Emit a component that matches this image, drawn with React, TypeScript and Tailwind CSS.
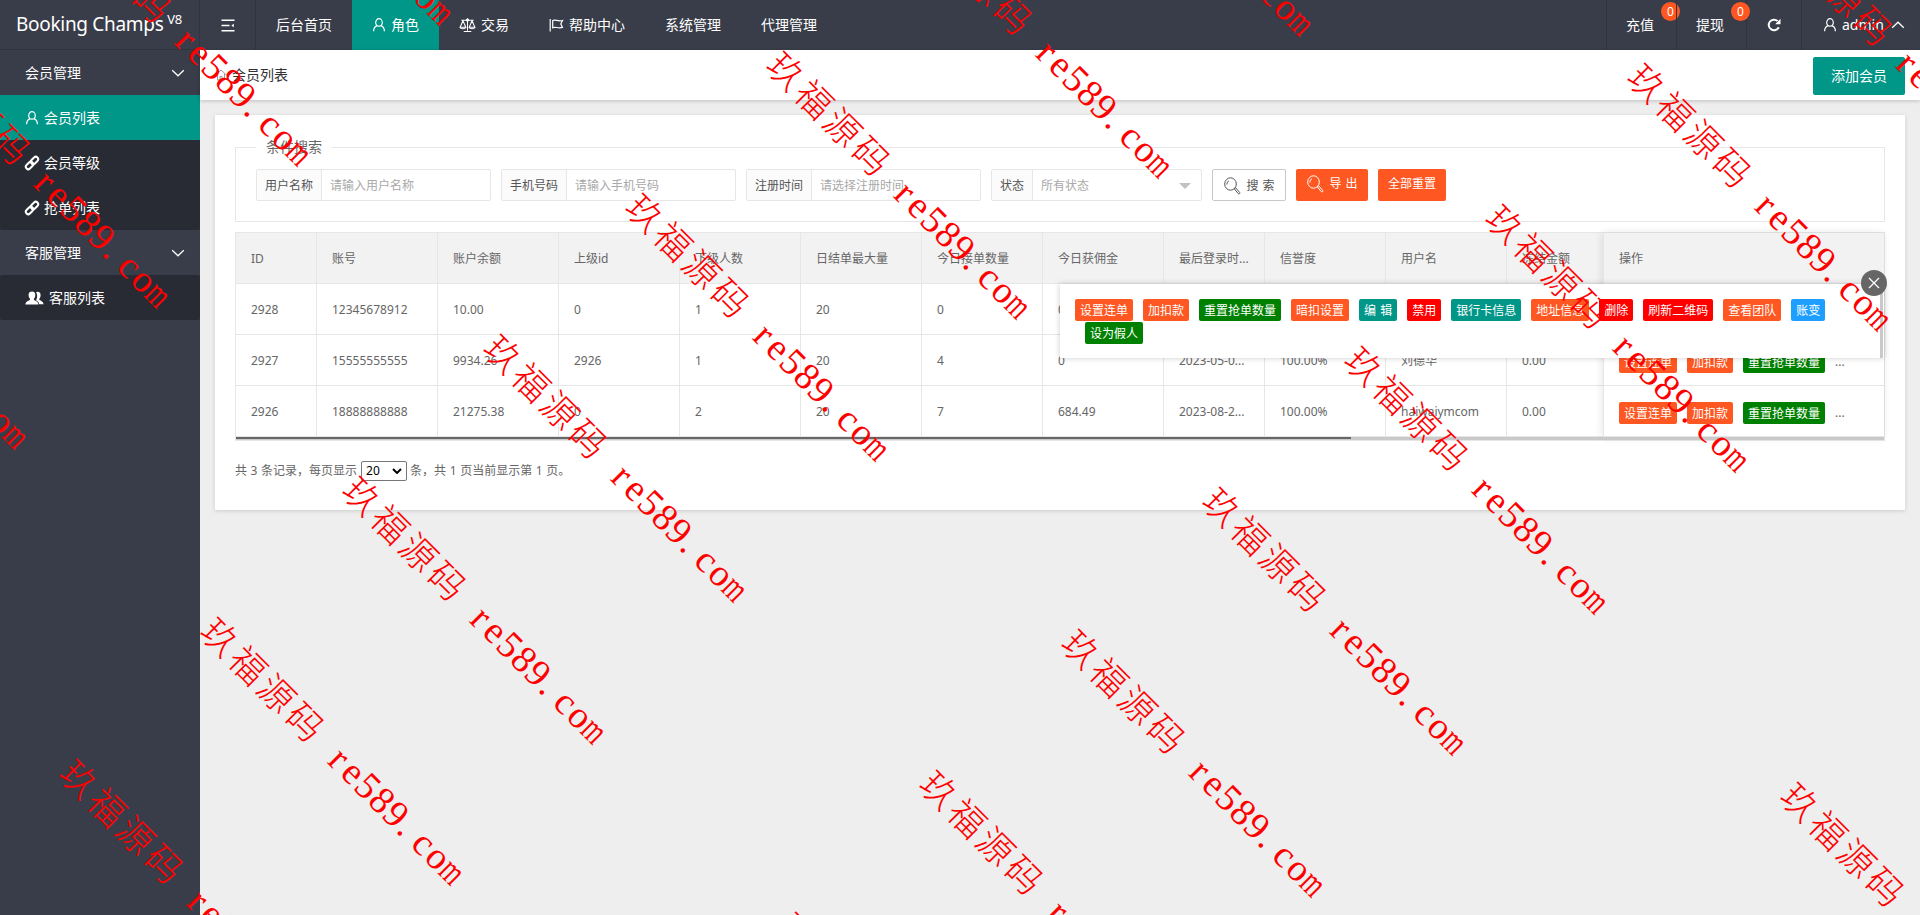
import type { ReactNode } from 'react';
import clsx from 'clsx';

const BUTTONS = {
  orange: 'bg-[#FF5722]',
  green: 'bg-[#008000]',
  teal: 'bg-[#009688]',
  red: 'bg-[#FF0000]',
  blue: 'bg-[#1E9FFF]',
} as const;

type ButtonColor = keyof typeof BUTTONS;

const columns = [
  { title: 'ID', width: 'w-[81px]' },
  { title: '账号', width: 'w-[121px]' },
  { title: '账户余额', width: 'w-[121px]' },
  { title: '上级id', width: 'w-[121px]' },
  { title: '下级人数', width: 'w-[121px]' },
  { title: '日结单最大量', width: 'w-[121px]' },
  { title: '今日接单数量', width: 'w-[121px]' },
  { title: '今日获佣金', width: 'w-[121px]' },
  { title: '最后登录时...', width: 'w-[101px]' },
  { title: '信誉度', width: 'w-[121px]' },
  { title: '用户名', width: 'w-[121px]' },
  { title: '冻结金额', width: 'w-[97px]' },
];

const rows = [
  ['2928', '12345678912', '10.00', '0', '1', '20', '0', '0', '', '', '', ''],
  ['2927', '15555555555', '9934.26', '2926', '1', '20', '4', '0', '2023-05-0...', '100.00%', '刘德华', '0.00'],
  ['2926', '18888888888', '21275.38', '0', '2', '20', '7', '684.49', '2023-08-2...', '100.00%', 'haiwaiymcom', '0.00'],
];

const rowActions: [string, ButtonColor][] = [
  ['设置连单', 'orange'],
  ['加扣款', 'orange'],
  ['重置抢单数量', 'green'],
];

const popupActions: [string, ButtonColor][] = [
  ...rowActions,
  ['暗扣设置', 'orange'],
  ['编 辑', 'teal'],
  ['禁用', 'red'],
  ['银行卡信息', 'teal'],
  ['地址信息', 'orange'],
  ['删除', 'red'],
  ['刷新二维码', 'red'],
  ['查看团队', 'orange'],
  ['账变', 'blue'],
];

// The watermark repeats every 616px along the 45° line, with 200px between lines
const watermarks: [number, number][] = [];
for (let i = -3; i <= 4; i++) {
  for (let j = -8; j <= 8; j++) {
    const x = 218 + i * 436 - j * 141.5;
    const y = 638 + i * 436 + j * 141.5;
    if (x > -250 && x < 1935 && y > -250 && y < 935) watermarks.push([x, y]);
  }
}

const UserIcon = () => (
  <svg viewBox="0 0 14 14" className="w-3.5 h-3.5 shrink-0" fill="none" stroke="currentColor" strokeWidth="1.2">
    <ellipse cx="7" cy="4.4" rx="3.3" ry="3.7" />
    <path d="M1.6 13.2c0-3.3 1.6-5 3.7-5.6M12.4 13.2c0-3.3-1.6-5-3.7-5.6" />
  </svg>
);

const LinkIcon = () => (
  <svg viewBox="0 0 14 14" className="w-3.5 h-3.5 shrink-0 overflow-visible" fill="none" stroke="currentColor" strokeWidth="2">
    <rect x="-4.2" y="-2.4" width="8.4" height="4.8" rx="2.4" transform="translate(4.5 9.5) rotate(-45)" />
    <rect x="-4.2" y="-2.4" width="8.4" height="4.8" rx="2.4" transform="translate(9.5 4.5) rotate(-45)" />
  </svg>
);

const GroupIcon = () => (
  <svg viewBox="0 0 19 14" className="w-[19px] h-3.5 shrink-0" fill="currentColor">
    <path d="M12.4.8c2.3 0 3.4 1.6 3.2 3.7-.1 1.5-.7 2.6-1.3 3.2v1.2c1.8.8 4 1.5 4.3 4.3h-4.4c-.5-2.2-1.9-3.2-3.3-3.9 1.3-1.6 1.9-5.6.2-7.9.3-.4.8-.6 1.3-.6z" />
    <path d="M7 .5c2.4 0 3.5 1.7 3.3 3.9-.1 1.6-.8 2.7-1.4 3.3v1.3c1.9.9 4.2 1.5 4.5 4.5H.4c.3-3 2.6-3.6 4.6-4.5V7.7c-.6-.6-1.3-1.7-1.4-3.3C3.4 2.2 4.6.5 7 .5z" />
  </svg>
);

const ScaleIcon = () => (
  <svg viewBox="0 0 18 16" className="w-[17px] h-4 shrink-0" fill="none" stroke="currentColor" strokeWidth="1.1">
    <path d="M9 .8v13.4M5 14.8h8M2.5 3h13M4.2 3.5L1.2 10.3h6zM13.8 3.5l-3 6.8h6z" />
    <path d="M1 10.3c.6 2.2 5.6 2.2 6.3 0M10.7 10.3c.6 2.2 5.6 2.2 6.3 0" />
    <circle cx="9" cy="2.8" r="1.2" />
  </svg>
);

const FlagIcon = () => (
  <svg viewBox="0 0 15 14" className="w-[15px] h-3.5 shrink-0" fill="none" stroke="currentColor" strokeWidth="1.2">
    <path d="M1.2 1v12.5" />
    <path d="M3.7 9.7V2.5c3-1.5 5 1.5 9.8 0L11.8 6l1.7 3.4c-4.6 1.5-6.8-1.2-9.8.3z" />
  </svg>
);

const SearchIcon = () => (
  <svg viewBox="0 0 18 18" className="w-[18px] h-[18px] shrink-0" fill="none" stroke="currentColor">
    <ellipse cx="7.5" cy="7" rx="5.8" ry="6.2" />
    <path d="M3.9 7.5c0-2 .9-3.2 2.1-3.7M11.3 11.8l1.4-1 4 4.7c.6 1-.6 2-1.5 1.1z" />
  </svg>
);

const Chevron = ({ up }: { up?: boolean }) => (
  <svg viewBox="0 0 14 8" className={clsx('w-3.5 h-2', up && 'rotate-180')} fill="none" stroke="currentColor" strokeWidth="1.3">
    <path d="M1.2 1.2L7 6.8l5.8-5.6" />
  </svg>
);

const NavItem = ({ icon, active, children }: { icon?: ReactNode; active?: boolean; children: ReactNode }) => (
  <li className={clsx('flex items-center gap-[5px] px-5 h-[50px]', active && 'bg-[#009688]')}>
    {icon}
    {children}
  </li>
);

const SideGroup = ({ title, children }: { title: string; children: ReactNode }) => (
  <li>
    <div className="flex items-center justify-between h-[45px] pl-[25px] pr-[15px]">
      <span>{title}</span>
      <Chevron />
    </div>
    <ul className="bg-[#282B33] rounded-[2px]">{children}</ul>
  </li>
);

const SideItem = ({ icon, active, children }: { icon: ReactNode; active?: boolean; children: ReactNode }) => (
  <li className={clsx('flex items-center gap-[5px] h-[45px] pl-[25px]', active && 'bg-[#009688]')}>
    {icon}
    {children}
  </li>
);

const TinyButton = ({ color, children }: { color: ButtonColor; children: ReactNode }) => (
  <button className={clsx('h-[22px] px-[5px] leading-[23px] rounded-[2px] text-white whitespace-nowrap shrink-0 [word-spacing:1px]', BUTTONS[color])}>
    {children}
  </button>
);

const Field = ({ label, placeholder, width, select }: { label: string; placeholder: string; width: string; select?: boolean }) => (
  <div className={clsx('flex shrink-0 h-8 border border-[#E6E6E6] rounded-[2px]', width)}>
    <label className="flex items-center px-2 pt-px bg-[#FBFBFB] border-r border-[#E6E6E6] text-[#555]">{label}</label>
    <div className="flex flex-1 items-center justify-between pt-px pl-2 pr-2.5 text-[#A9A9A9]">
      {placeholder}
      {select && <span className="border-x-[6px] border-x-transparent border-t-[6px] border-t-[#C2C2C2]" />}
    </div>
  </div>
);

const Badge = () => (
  <span className="absolute -right-1 top-[2px] w-[19px] h-[19px] rounded-full bg-[#FF5722] text-xs leading-[19px] text-center">
    0
  </span>
);

const Header = () => (
  <header className="flex h-[50px] bg-[#393D49] text-white text-sm">
    <div className="shrink-0 w-[200px] h-[50px] pl-4 border-r border-b border-[#31343F] text-[19px] leading-[49px] whitespace-nowrap tracking-[-0.3px]">
      Booking Champs <sup className="text-[13px] -top-[7px] -left-px">V8</sup>
    </div>
    <div className="flex items-center justify-center w-14 border-r border-[#31343F]">
      <svg viewBox="0 0 14 13" className="w-3.5 h-[13px]" stroke="currentColor" strokeWidth="1.6" fill="currentColor">
        <path d="M.5 1.3h13M.5 6.5h8M.5 11.7h13" />
        <path d="M12.8 4.8v3.4L10.3 6.5z" stroke="none" />
      </svg>
    </div>
    <ul className="flex">
      <NavItem>后台首页</NavItem>
      <NavItem icon={<UserIcon />} active>角色</NavItem>
      <NavItem icon={<ScaleIcon />}>交易</NavItem>
      <NavItem icon={<FlagIcon />}>帮助中心</NavItem>
      <NavItem>系统管理</NavItem>
      <NavItem>代理管理</NavItem>
    </ul>
    <ul className="flex ml-auto">
      <li className="relative flex items-center w-[70px] pl-[19px] border-l border-[#31343F]">
        充值
        <Badge />
      </li>
      <li className="relative flex items-center w-[70px] pl-[19px] border-l border-[#31343F]">
        提现
        <Badge />
      </li>
      <li className="flex items-center justify-center w-14 border-x border-[#31343F]">
        <svg viewBox="0 0 14 14" className="w-3.5 h-3.5" fill="none" stroke="currentColor" strokeWidth="2">
          <path d="M11.8 9.3A5.3 5.3 0 1 1 10.6 3" />
          <path d="M13.5.8v5.4H8.2z" fill="currentColor" stroke="none" />
        </svg>
      </li>
      <li className="flex items-center w-[118px] pl-[21px] gap-[5px]">
        <UserIcon />
        admin
        <span className="ml-[2px]"><Chevron up /></span>
      </li>
    </ul>
  </header>
);

const SearchForm = () => (
  <fieldset className="h-[85px] mt-[-10px] px-5 border border-[#E6E6E6]">
    <legend className="px-2.5 text-sm leading-5 text-[#666]">条件搜索</legend>
    <div className="flex gap-2.5 pt-3">
      <Field label="用户名称" placeholder="请输入用户名称" width="w-[235px]" />
      <Field label="手机号码" placeholder="请输入手机号码" width="w-[235px]" />
      <Field label="注册时间" placeholder="请选择注册时间" width="w-[235px]" />
      <Field label="状态" placeholder="所有状态" width="w-[211px]" select />
      <button className="flex items-center justify-center gap-[5px] w-[74px] h-8 pt-px border border-[#C9C9C9] rounded-[2px] text-[#555] [word-spacing:1px]">
        <SearchIcon />搜 索
      </button>
      <button className="flex items-center justify-center gap-[5px] w-[72px] h-8 pb-[3px] rounded-[2px] bg-[#FF5722] text-white [word-spacing:1px]">
        <SearchIcon />导 出
      </button>
      <button className="w-[68px] h-8 pb-[3px] rounded-[2px] bg-[#FF5722] text-white">全部重置</button>
    </div>
  </fieldset>
);

const cell = 'shrink-0 px-[15px] leading-[52px] h-[51px] border-b border-[#E6E6E6] whitespace-nowrap overflow-hidden';

const MemberTable = () => (
  <div className="relative mt-2.5 h-[209px] border border-[#E6E6E6]">
    <div className="flex">
      <div className="flex-1 min-w-0 overflow-hidden">
        <div className="flex bg-[#F2F2F2]">
          {columns.map((column) => (
            <div key={column.title} className={clsx(cell, 'border-r', column.width)}>{column.title}</div>
          ))}
        </div>
        {rows.map((row) => (
          <div key={row[0]} className="flex">
            {columns.map((column, index) => (
              <div key={column.title} className={clsx(cell, 'border-r', column.width)}>{row[index]}</div>
            ))}
          </div>
        ))}
      </div>
      <div className="shrink-0 w-[281px] relative border-l border-[#E6E6E6] shadow-[-1px_0_8px_rgba(0,0,0,.1)] bg-white">
        <div className={clsx(cell, 'bg-[#F2F2F2]')}>操作</div>
        {rows.map((row, index) => (
          <div key={row[0]} className="flex items-center gap-2.5 h-[51px] pl-[15px] pt-1 border-b border-[#E6E6E6]">
            {index > 0 && rowActions.map(([label, color]) => (
              <TinyButton key={label} color={color}>{label}</TinyButton>
            ))}
            {index > 0 && <span>...</span>}
          </div>
        ))}
      </div>
    </div>
    <div className="relative h-[3px] bg-[#C9C9C9]">
      <div className="h-[2px] w-[1115px] bg-[#666]" />
    </div>
    <RowActionsPopup />
  </div>
);

// Expanded action cell of the first row, laid over the table
const RowActionsPopup = () => (
  <div className="absolute right-0 top-[51px] w-[824px] h-[74px] pl-[15px] pt-[15px] bg-white shadow-[0_0_6px_rgba(0,0,0,.2)]">
    <div className="flex gap-2.5">
      {popupActions.map(([label, color]) => (
        <TinyButton key={label} color={color}>{label}</TinyButton>
      ))}
    </div>
    <div className="flex mt-px pl-2.5">
      <TinyButton color="green">设为假人</TinyButton>
    </div>
    <span className="absolute right-px bottom-0 w-[3px] h-[68px] bg-[#C9C9C9]" />
    <span className="absolute -right-[3px] -top-[14px] flex items-center justify-center w-[26px] h-[26px] rounded-full bg-[#666] text-white">
      <svg viewBox="0 0 12 12" className="w-3 h-3" stroke="currentColor" strokeWidth="1.3">
        <path d="M1 1l10 10M11 1L1 11" />
      </svg>
    </span>
  </div>
);

const Watermark = () => (
  <div className="pointer-events-none absolute inset-0 overflow-hidden text-[#FF0000]">
    {watermarks.map(([x, y]) => (
      <div
        key={`${x},${y}`}
        className="absolute flex w-[360px] h-10 origin-[20px_20px] rotate-45"
        style={{ left: x - 19, top: y - 20 }}
      >
        <span className="w-[180px] pl-[2px] text-[36px] leading-[37px] tracking-[4px] font-light whitespace-nowrap">
          玖福源码
        </span>
        {'re589.com'.split('').map((char, index) => (
          <span
            key={index}
            className={clsx(
              "flex justify-center w-5 text-[38px] leading-[39px] font-['Liberation_Serif',serif]",
              char === 'm' && 'scale-x-[.66]',
              char === '.' && '-translate-x-1'
            )}
          >
            {char}
          </span>
        ))}
      </div>
    ))}
  </div>
);

const App = () => (
  <div className="relative flex flex-col w-[1920px] h-[915px] overflow-hidden bg-[#EEE] font-['Noto_Sans','Noto_Sans_CJK_SC',sans-serif] text-xs text-[#666]">
    <Header />
    <div className="flex flex-1">
      <aside className="shrink-0 w-[200px] bg-[#393D49] text-white text-sm">
        <ul>
          <SideGroup title="会员管理">
            <SideItem icon={<UserIcon />} active>会员列表</SideItem>
            <SideItem icon={<LinkIcon />}>会员等级</SideItem>
            <SideItem icon={<LinkIcon />}>抢单列表</SideItem>
          </SideGroup>
          <SideGroup title="客服管理">
            <SideItem icon={<GroupIcon />}>客服列表</SideItem>
          </SideGroup>
        </ul>
      </aside>
      <main className="flex-1 min-w-0">
        <div className="flex items-center h-[50px] px-[15px] bg-white text-sm text-[#333] shadow-[0_1px_4px_rgba(0,0,0,.2)]">
          <svg viewBox="0 0 12 12" className="w-3 h-3 mr-[5px]" fill="none" stroke="#999">
            <path d="M.5 6L6 1l5.5 5M2.5 5v6H5V7.5h2V11h2.5V5" />
          </svg>
          会员列表
          <button className="w-[92px] h-[38px] ml-auto mt-[2px] rounded-[2px] bg-[#009688] text-white">添加会员</button>
        </div>
        <section className="h-[395px] m-[15px] px-5 pt-8 bg-white shadow-[0_1px_4px_rgba(0,0,0,.15)]">
          <SearchForm />
          <MemberTable />
          <div className="flex items-center mt-5 [word-spacing:0.5px]">
            共 3 条记录，每页显示
            <span className="flex items-center justify-between w-[46px] h-5 ml-1 mr-[3px] px-1 border border-[#767676] rounded-[2px] text-black">
              20
              <svg viewBox="0 0 10 6" className="w-2.5 h-1.5" fill="none" stroke="currentColor" strokeWidth="2">
                <path d="M1 1l4 4 4-4" />
              </svg>
            </span>
            条，共 1 页当前显示第 1 页。
          </div>
        </section>
      </main>
    </div>
    <Watermark />
  </div>
);

export default App;
